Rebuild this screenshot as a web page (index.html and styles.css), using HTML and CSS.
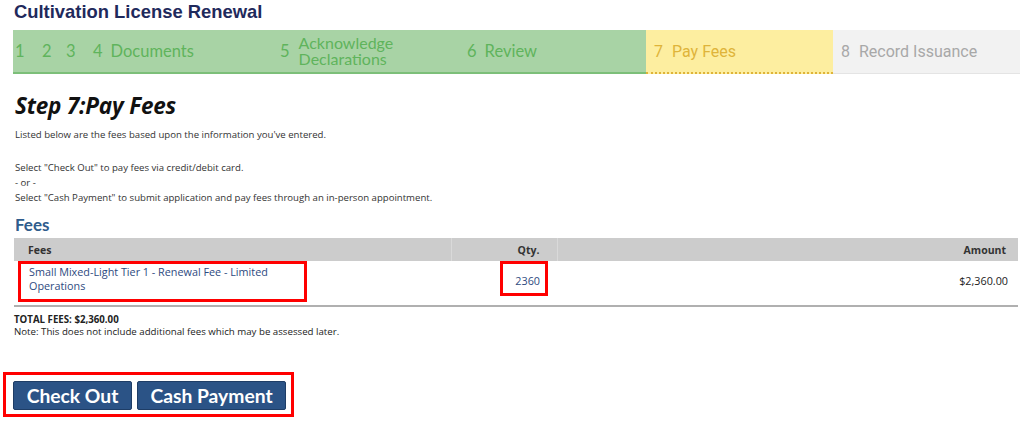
FILE: index.html
```html
<!DOCTYPE html>
<html>
<head>
<meta charset="utf-8">
<link rel="stylesheet" href="styles.css">
</head>
<body>
<h1 class="title">Cultivation License Renewal</h1>
<div class="stepbar">
  <div class="done small first"><span class="num">1</span></div>
  <div class="done small"><span class="num">2</span></div>
  <div class="done small"><span class="num">3</span></div>
  <div class="done step"><span class="num">4</span><span class="lbl">Documents</span></div>
  <div class="done step"><span class="num">5</span><span class="lbl two">Acknowledge<br>Declarations</span></div>
  <div class="done step"><span class="num">6</span><span class="lbl">Review</span></div>
  <div class="current step"><span class="num">7</span><span class="lbl">Pay Fees</span></div>
  <div class="todo step"><span class="num">8</span><span class="lbl">Record Issuance</span></div>
</div>

<h2 class="step-title">Step 7:Pay Fees</h2>
<div class="intro">
  <p>Listed below are the fees based upon the information you've entered.</p>
  <p class="gap">Select "Check Out" to pay fees via credit/debit card.<br>- or -<br>Select "Cash Payment" to submit application and pay fees through an in-person appointment.</p>
</div>

<h3 class="fees-title">Fees</h3>
<table class="fees">
  <thead>
    <tr><th class="c1">Fees</th><th class="c2">Qty.</th><th class="c3">Amount</th></tr>
  </thead>
  <tbody>
    <tr>
      <td class="c1"><div class="mark desc">Small Mixed-Light Tier 1 - Renewal Fee - Limited<br>Operations</div></td>
      <td class="c2"><div class="mark qty">2360</div></td>
      <td class="c3 amount">$2,360.00</td>
    </tr>
  </tbody>
</table>
<div class="totals">
  <div class="total">TOTAL FEES: $2,360.00</div>
  <div>Note: This does not include additional fees which may be assessed later.</div>
</div>

<div class="actions">
  <div class="mark buttons">
    <button class="btn">Check Out</button>
    <button class="btn">Cash Payment</button>
  </div>
</div>
</body>
</html>
```

FILE: styles.css
```css
* { box-sizing: border-box; }
html, body { margin: 0; padding: 0; background: #fff; }
body { font-family: "Open Sans", Lato, sans-serif; color: #333; }

.title {
  margin: 0;
  padding: 2px 0 0 14px;
  height: 30px;
  font-family: "Liberation Sans", Arial, sans-serif;
  font-size: 18.4px;
  font-weight: bold;
  color: #1f2a5c;
  line-height: 20px;
}

.stepbar {
  display: flex;
  margin-left: 13px;
  width: 1007px;
  height: 44px;
}
.stepbar > div {
  display: flex;
  align-items: center;
  height: 44px;
  font-family: Lato, "Open Sans", sans-serif;
  font-size: 16.5px;
}
.done { background: #a8d3a5; color: #5fb45c; border-bottom: 2px solid #7cbf79; }
.stepbar > .current { background: #fdeea0; color: #dfb43a; border-bottom: 2px dotted #dfb43a; font-family: Roboto, Arial, sans-serif; font-size: 16px; }
.stepbar > .todo { background: #f2f2f2; color: #a8a8a8; border-bottom: 1px solid #e4e4e4; font-family: Roboto, Arial, sans-serif; font-size: 16px; }
.small { width: 24px; padding-left: 5px; }
.small.first { padding-left: 2px; }
.step { width: 187px; padding-left: 8px; }
.num { display: inline-block; }
.lbl { margin-left: 8px; }
.current .lbl, .todo .lbl { margin-left: 9px; }
.lbl.two { font-size: 16px; line-height: 16px; margin-left: 9px; margin-top: -1px; }

.step-title {
  margin: 0;
  padding: 18px 0 0 15px;
  font-family: "Open Sans", Lato, sans-serif;
  font-style: italic;
  font-weight: bold;
  font-size: 22.5px;
  line-height: 28px;
  color: #111;
  letter-spacing: -0.2px;
}

.intro { padding-left: 15px; font-size: 9.6px; color: #333; line-height: 15px; }
.intro p { margin: 0; }
.intro p:first-child { margin-top: 7px; }
.intro p.gap { margin-top: 18px; }

.fees-title {
  margin: 0;
  padding: 9px 0 0 15px;
  font-family: Lato, "Open Sans", sans-serif;
  font-size: 17px;
  font-weight: bold;
  color: #2f5c8c;
  line-height: 22px;
}

.fees {
  margin: 2px 0 0 14px;
  width: 1004px;
  border-collapse: collapse;
  font-size: 10.8px;
}
.fees th {
  background: #cccccc;
  height: 23px;
  font-size: 10.5px;
  font-weight: bold;
  color: #333;
  padding: 0 10px 0 14px;
  border-left: 1px solid #d9d9d9;
}
.fees th:first-child { border-left: none; text-align: left; }
.fees th.c2 { text-align: right; padding-right: 17px; }
.fees th.c3 { text-align: right; padding-right: 12px; }
.c1 { width: 437px; }
.c2 { width: 106px; }
.fees td {
  border-bottom: 2px solid #b0b0b0;
  height: 45px;
  padding: 0;
  vertical-align: top;
}
.mark { border: 3px solid #ff0000; }
.desc {
  margin: 0 0 0 4px;
  width: 289px;
  height: 41px;
  padding: 1px 0 0 8px;
  color: #2e4a80;
  line-height: 14px;
}
.fees td.c2 { text-align: right; padding-right: 9px; }
.qty {
  display: inline-block;
  width: 48px;
  height: 35px;
  line-height: 29px;
  text-align: right;
  padding: 2px 5px 0 0;
  color: #2e4a80;
}
.fees td.amount { text-align: right; padding-right: 10px; line-height: 40px; color: #222; }

.totals { padding: 7px 0 0 14px; font-size: 9.7px; line-height: 12px; color: #222; }
.total { font-weight: bold; }

.actions { padding: 34px 0 0 3px; }
.buttons {
  display: inline-flex;
  gap: 5px;
  padding: 6px 5px 4px 7px;
}
.btn {
  height: 29px;
  padding: 0;
  background: #2b5386;
  border: 1px solid #1e3d66;
  border-radius: 2px;
  color: #fff;
  font-family: Lato, "Open Sans", sans-serif;
  font-weight: bold;
  font-size: 19.3px;
  line-height: 27px;
}
.btn:first-child { width: 119px; }
.btn:last-child { width: 149px; }
```
